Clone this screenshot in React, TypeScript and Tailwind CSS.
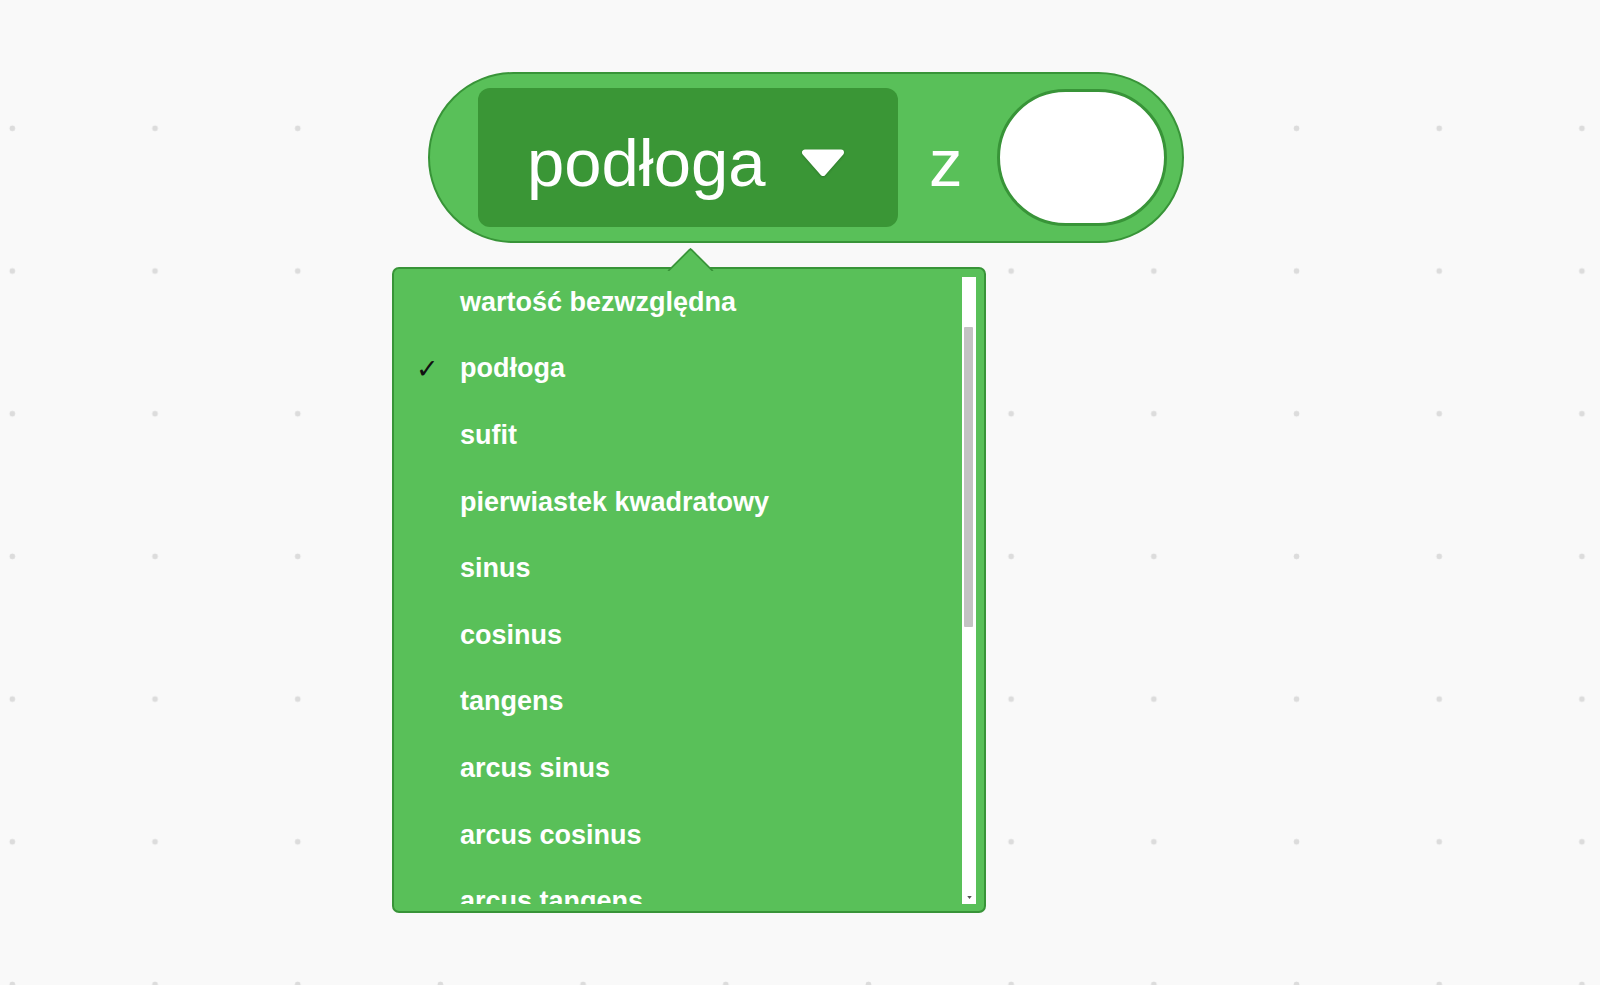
import React from 'react'

const OPCJE = [
  'wartość bezwzględna',
  'podłoga',
  'sufit',
  'pierwiastek kwadratowy',
  'sinus',
  'cosinus',
  'tangens',
  'arcus sinus',
  'arcus cosinus',
  'arcus tangens',
]

const WYBRANA = 'podłoga'

function Caret() {
  return (
    <svg viewBox="0 0 44 28" className="h-[28px] w-[44px] drop-shadow-[0_1px_1px_rgba(0,0,0,0.2)]">
      <polygon
        points="4,3.5 40,3.5 22,24"
        fill="#ffffff"
        stroke="#ffffff"
        strokeWidth="6"
        strokeLinejoin="round"
      />
    </svg>
  )
}

export default function App() {
  return (
    <div
      className="relative h-[985px] w-full overflow-hidden bg-[#f9f9f9] bg-[radial-gradient(circle,#dcdcdc_2.6px,transparent_3.2px)] bg-size-[142.7px_142.7px] bg-[length:142.7px_142.7px] bg-position-[-59px_57px] bg-[position:-59px_57px] pl-[428px] pt-[72px]"
      style={{ fontFamily: '"Liberation Sans", Arial, sans-serif' }}
    >
      {/* BLOK */}
      <div className="box-border flex h-[171px] w-[756px] items-center rounded-full border-2 border-[#389438] bg-[#59c059] pl-[48px]">
        <div className="flex h-[139px] w-[420px] items-center rounded-[12px] bg-[#3a9636] pl-[49px]">
          <span className="pt-[10px] text-[67px] leading-none text-white">podłoga</span>
          <span className="ml-[36px] pt-[10px]">
            <Caret />
          </span>
        </div>
        <span className="ml-[31px] pt-[10px] text-[67px] leading-none text-white">z</span>
        <div className="ml-[34px] box-border h-[137px] w-[170px] rounded-full border-[3px] border-[#389438] bg-white" />
      </div>

      {/* MENU */}
      <div className="absolute left-[392px] top-[267px] box-border flex h-[646px] w-[594px] rounded-[7px] border-2 border-[#389438] bg-[#59c059]">
        <div className="absolute left-[273px] top-[-22px] z-10 h-[24px] w-[47px] overflow-hidden">
          <div className="absolute left-[7px] top-[7px] box-border h-[33px] w-[33px] rotate-45 rounded-tl-[3px] border-l-2 border-t-2 border-[#389438] bg-[#59c059]" />
        </div>

        <div className="mb-[7px] flex-1 overflow-hidden">
          {OPCJE.map((o) => (
            <div key={o} className="flex h-[66.6px] shrink-0 items-center pl-[22px]">
              <span
                className="w-[44px] text-[27px] font-bold leading-none text-[#111]"
                style={{ fontFamily: '"DejaVu Sans", sans-serif' }}
              >
                {o === WYBRANA ? '✓' : ''}
              </span>
              <span className="text-[27px] font-bold leading-none text-white">{o}</span>
            </div>
          ))}
        </div>

        <div className="mb-[7px] mr-[8px] mt-[8px] flex w-[14px] flex-col bg-white">
          <div className="ml-[2px] mt-[50px] h-[300px] w-[9px] rounded-[1px] bg-[#c3c3c3]" />
          <div className="flex-1" />
          <svg viewBox="0 0 6 4" className="mx-auto mb-[5px] h-[3px] w-[5px]">
            <polygon points="0,0 6,0 3,4" fill="#555" />
          </svg>
        </div>
      </div>
    </div>
  )
}
